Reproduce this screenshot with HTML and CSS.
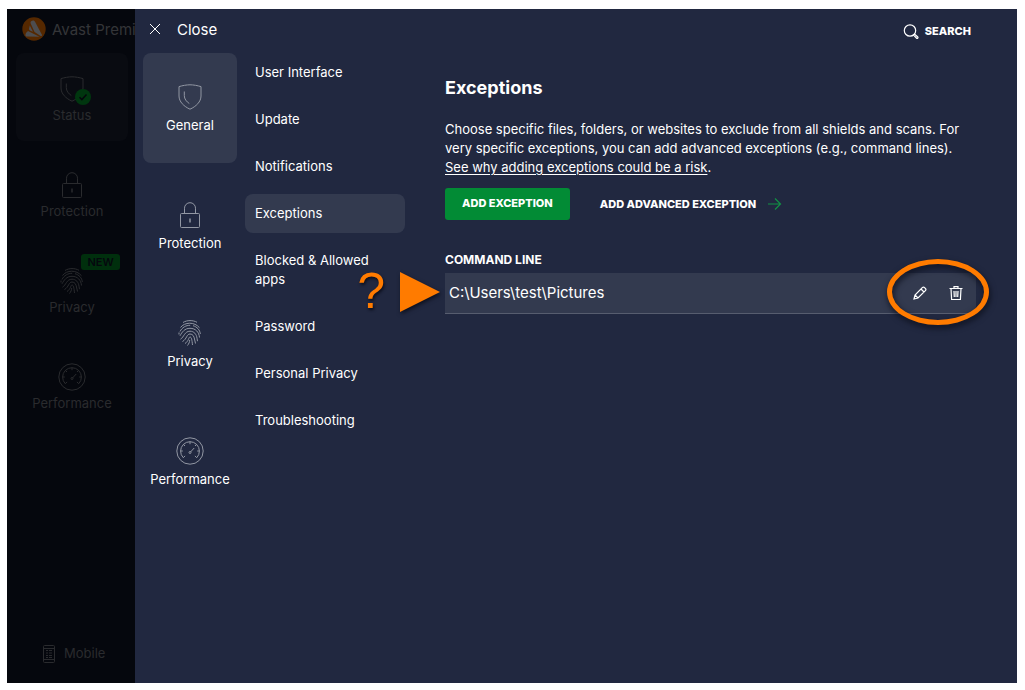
FILE: index.html
```html
<!DOCTYPE html>
<html lang="en">
<head>
<meta charset="utf-8">
<title>Avast Premium Security - Exceptions</title>
<link rel="stylesheet" href="styles.css">
</head>
<body>
<svg class="defs" aria-hidden="true">
  <symbol id="shield" viewBox="0 0 28 28">
    <path d="M14 1.8C10.5 1.8 6.500 2.600 3 3.600V13c0 5.800 5 10.500 11 13.200C20 23.500 25 18.800 25 13V3.600C21.500 2.600 17.500 1.800 14 1.800z"/>
    <path d="M8.300 8.500v4.200c0 3.200 2.200 6 5 7.800"/>
  </symbol>
  <symbol id="lock" viewBox="0 0 28 28">
    <rect x="4.500" y="12.500" width="19" height="14" rx="1"/>
    <path d="M8.500 12.500V7.200a5.500 5.500 0 0 1 11 0v5.300"/>
    <path d="M14 17.500v4" stroke-width="1.500"/>
  </symbol>
  <symbol id="finger" viewBox="0 0 28 28">
    <path d="M7 3.500C11 1 17 1 21 3.300M4.500 8.500c4-5.500 14-6 19 .3M4 12.500c2-4 6-6.300 10.200-6.200M17 6.700c4 1.100 7 4.300 7.300 8.300M4 16.800c2-3.600 4.500-7.500 10-7.500 5.500 0 9 3.700 9.500 9.200M4.500 20.200c3.500-2 4-8 9.500-8 4 0 6.500 3 7 7l.5 3M6.500 22.500c4.500-2.500 4-7.500 7.500-7.500 3 0 4 2.500 4.500 5l1 4.500M9 24.500c4-2.500 3.500-6.500 5-6.500s2 3 2.500 8M13.700 21c0 2-1 4-2.200 5.500M3 13.500v2"/>
  </symbol>
  <symbol id="gauge" viewBox="0 0 28 28">
    <circle cx="14" cy="14" r="13.200"/>
    <path d="M7.300 20.700a9.400 9.400 0 1 1 13.400 0M7.300 20.700l1.800-1.800M20.700 20.700l-1.800-1.800M4.600 14h2.200M23.400 14h-2.200M14 4.600v2.600M7.300 7.300l1.700 1.700M20.700 7.300L19 9M14.500 15l3.700-4"/>
    <circle cx="14" cy="15.500" r="1"/>
  </symbol>
</svg>

<div class="window">
  <aside class="sidebar">
    <div class="brand">
      <svg class="brand-logo" viewBox="0 0 24 24" aria-hidden="true">
        <circle class="logo-disc" cx="12" cy="12" r="11.700"/>
        <path class="logo-mark" d="M9.500 4c1.200-1 2.800-.6 3.400.6l7 13.200c.3.800-.2 1.500-1.200 1.200L12.500 15 8.700 6.500C8.300 5.500 8.700 4.600 9.500 4zM7.800 8.500l3.200 6.200-2.500-1c-1.200-.5-1.700-1.300-1.400-2.400zM6 14l11.500 5.800-12.300-.2c-2.200 0-2.200-2-.8-4z"/>
      </svg>
      <span>Avast Premium</span>
    </div>
    <nav class="main-nav" aria-label="Main">
      <button class="main-item current"><svg class="icon"><use href="#shield"/></svg>
        <svg class="ok" viewBox="0 0 16 16"><circle cx="8" cy="8" r="8"/><path d="M4.500 8.200l2.400 2.400 4.600-5"/></svg>Status</button>
      <button class="main-item"><svg class="icon"><use href="#lock"/></svg>Protection</button>
      <button class="main-item"><span class="badge">NEW</span><svg class="icon"><use href="#finger"/></svg>Privacy</button>
      <button class="main-item"><svg class="icon"><use href="#gauge"/></svg>Performance</button>
    </nav>
    <button class="mobile">
      <svg class="mobile-icon" viewBox="0 0 12 18" aria-hidden="true"><rect x=".5" y=".5" width="11" height="17" rx="1"/><path d="M1 3.500h10M1 14.500h10M3 5.500h2M6 5.500h3M3 8h2M6 8h3M3 10.500h2M6 10.500h3M3 12.500h2M6 12.500h3"/></svg>
      Mobile
    </button>
  </aside>

  <section class="drawer">
    <header class="topbar">
      <button class="close"><svg class="close-icon" viewBox="0 0 12 12" aria-hidden="true"><path d="M1 1l10 10M11 1L1 11"/></svg>Close</button>
      <button class="search"><svg class="search-icon" viewBox="0 0 16 16" aria-hidden="true"><circle cx="7" cy="7.500" r="5.700"/><path d="M10.500 12l1-1 3.300 3c.6 1-.5 1.700-1.200 1.200z"/></svg>SEARCH</button>
    </header>
    <div class="body">
      <nav class="categories" aria-label="Settings categories">
        <button class="category current"><svg class="icon"><use href="#shield"/></svg>General</button>
        <button class="category"><svg class="icon"><use href="#lock"/></svg>Protection</button>
        <button class="category"><svg class="icon"><use href="#finger"/></svg>Privacy</button>
        <button class="category"><svg class="icon"><use href="#gauge"/></svg>Performance</button>
      </nav>
      <nav class="sections" aria-label="General settings">
        <a href="#">User Interface</a>
        <a href="#">Update</a>
        <a href="#">Notifications</a>
        <a href="#" class="current">Exceptions</a>
        <a href="#">Blocked &amp; Allowed apps</a>
        <a href="#">Password</a>
        <a href="#">Personal Privacy</a>
        <a href="#">Troubleshooting</a>
      </nav>
      <main class="content">
        <h1>Exceptions</h1>
        <p class="intro">Choose specific files, folders, or websites to exclude from all shields and scans. For very specific exceptions, you can add advanced exceptions (e.g., command lines).<br><a href="#">See why adding exceptions could be a risk</a>.</p>
        <div class="actions">
          <button class="primary">ADD EXCEPTION</button>
          <button class="secondary">ADD ADVANCED EXCEPTION<svg class="arrow" viewBox="0 0 14 12" aria-hidden="true"><path d="M0 6h12.500M7 .5L12.500 6 7 11.500"/></svg></button>
        </div>
        <h2>COMMAND LINE</h2>
        <div class="row">
          <span class="path">C:\Users\test\Pictures</span>
          <button class="tool" aria-label="Edit"><svg viewBox="0 0 14 14" aria-hidden="true"><path d="M1 13l1-4L9.300 1.700c.8-.8 1.600-.8 2.300 0l.8.800c.7.700.7 1.500 0 2.200L5 12zM8 3l3 3M2 9l3 3"/></svg></button>
          <button class="tool" aria-label="Delete"><svg viewBox="0 0 14 14" aria-hidden="true"><path d="M.5 2.500h13M5 2.300V.7h4v1.600M2 2.500l.6 11h8.800l.6-11M5 5l.3 6M7 5v6M9 5l-.3 6"/></svg></button>
          <span class="question">?</span>
          <svg class="pointer" viewBox="0 0 40 40" aria-hidden="true"><path d="M0 0l40 20L0 40z"/></svg>
          <span class="ring"></span>
        </div>
      </main>
    </div>
  </section>
</div>
</body>
</html>
```
FILE: styles.css
```css
* { box-sizing: border-box; }
body {
  margin: 0;
  padding: 9px 8px 7px 7px;
  height: 100vh;
  background: #fff;
  color: #fff;
  font: 13px/19px Inter, "Liberation Sans", sans-serif;
}
button {
  margin: 0;
  padding: 0;
  border: 0;
  background: none;
  color: inherit;
  font: inherit;
  cursor: pointer;
}
a { color: inherit; }
svg { fill: none; stroke: currentColor; flex: none; }
.defs { position: absolute; width: 0; height: 0; }
.icon { width: 28px; height: 28px; }

.window {
  display: grid;
  grid-template-columns: 128px minmax(0, 1fr);
  height: 100%;
  background: #212840;
}

.sidebar {
  display: flex;
  flex-direction: column;
  overflow: hidden;
  background: #05070d;
  color: #2a2b2e;
}
.brand {
  display: flex;
  align-items: center;
  gap: 6px;
  height: 40px;
  padding-left: 15px;
  font-size: 15px;
  white-space: nowrap;
  color: #343538;
}
.brand-logo { width: 24px; height: 24px; stroke: none; }
.logo-disc { fill: #552800; }
.logo-mark { fill: #4d4d4f; }
.main-nav {
  display: grid;
  gap: 8px;
  padding: 4px 7px 0 9px;
}
.main-item {
  position: relative;
  display: flex;
  flex-direction: column;
  align-items: center;
  justify-content: center;
  gap: 3px;
  height: 88px;
  padding-top: 5px;
  border-radius: 8px;
}
.main-item.current { background: #090b11; }
.ok {
  position: absolute;
  left: 59px;
  top: 36px;
  width: 16px;
  height: 16px;
  stroke: #05070d;
  stroke-width: 1.500;
}
.ok circle { fill: #00360f; stroke: none; }
.badge {
  position: absolute;
  right: 8px;
  top: 9px;
  width: 39px;
  border-radius: 3px;
  background: #002f0d;
  color: #05070d;
  font-size: 11px;
  line-height: 16px;
  font-weight: 600;
  text-align: center;
}
.mobile {
  display: flex;
  align-items: center;
  gap: 9px;
  margin-top: auto;
  padding: 0 0 20px 36px;
}
.mobile-icon { width: 12px; height: 18px; }

.topbar {
  display: flex;
  align-items: center;
  justify-content: space-between;
  height: 44px;
  padding: 0 46px 0 14px;
}
.close {
  display: flex;
  align-items: center;
  gap: 16px;
  padding-bottom: 4px;
  font-size: 15px;
}
.close-icon { width: 12px; height: 12px; }
.search {
  display: flex;
  align-items: center;
  gap: 6px;
  font-size: 11px;
  font-weight: 800;
}
.search-icon { width: 16px; height: 16px; stroke-width: 1.200; }

.body {
  display: grid;
  grid-template-columns: 94px 168px minmax(0, 1fr);
  padding: 0 41px 0 8px;
}
.categories {
  display: grid;
  gap: 8px;
  align-content: start;
}
.category {
  display: flex;
  flex-direction: column;
  align-items: center;
  justify-content: center;
  gap: 5px;
  height: 110px;
  padding-top: 2px;
  border-radius: 8px;
}
.category .icon { color: #9297a3; }
.category.current, .sections .current { background: #333a4f; }
.sections {
  display: grid;
  gap: 8px;
  align-content: start;
  padding-left: 8px;
}
.sections a {
  padding: 10px;
  border-radius: 8px;
  text-decoration: none;
}
.content { padding: 23px 0 0 40px; }
h1 {
  margin: 0;
  font-size: 18px;
  line-height: 24px;
  font-weight: 700;
}
.intro { margin: 20px 0 11px; }
.intro a { text-underline-offset: 2px; }
.actions {
  display: flex;
  gap: 30px;
  font-size: 11px;
  font-weight: 800;
}
.primary {
  height: 32px;
  padding: 0 17px 2px;
  border-radius: 3px;
  background: #028b35;
}
.secondary {
  display: flex;
  align-items: center;
  gap: 12px;
}
.arrow { width: 14px; height: 12px; color: #119144; stroke-width: 1.200; }
h2 {
  margin: 30px 0 4px;
  font-size: 12px;
  line-height: 19px;
  font-weight: 700;
}
.row {
  position: relative;
  display: flex;
  align-items: center;
  gap: 22px;
  height: 41px;
  padding: 0 13px 0 4px;
  border-bottom: 1px solid #575d6f;
  background: #333a4f;
}
.path { margin-right: auto; padding-bottom: 2px; font-size: 15px; }
.tool, .tool svg { display: block; width: 14px; height: 14px; }
.tool svg { stroke-width: 1.200; }
.question {
  position: absolute;
  right: 100%;
  top: -7px;
  margin-right: 60px;
  color: #ff7b00;
  font: 50px/50px "Liberation Sans", sans-serif;
  text-shadow: 1px 2px 3px #0c0f1c;
}
.pointer {
  position: absolute;
  right: 100%;
  top: -1px;
  width: 40px;
  height: 40px;
  margin-right: 5px;
  fill: #ff7b00;
  stroke: none;
  overflow: visible;
  filter: drop-shadow(1px 2px 2px #0c0f1c);
}
.ring {
  position: absolute;
  right: -13px;
  top: -14px;
  width: 102px;
  height: 66px;
  border: 5px solid #ff7b00;
  border-radius: 50%;
  filter: drop-shadow(1px 3px 3px #0c0f1c);
  pointer-events: none;
}
```
